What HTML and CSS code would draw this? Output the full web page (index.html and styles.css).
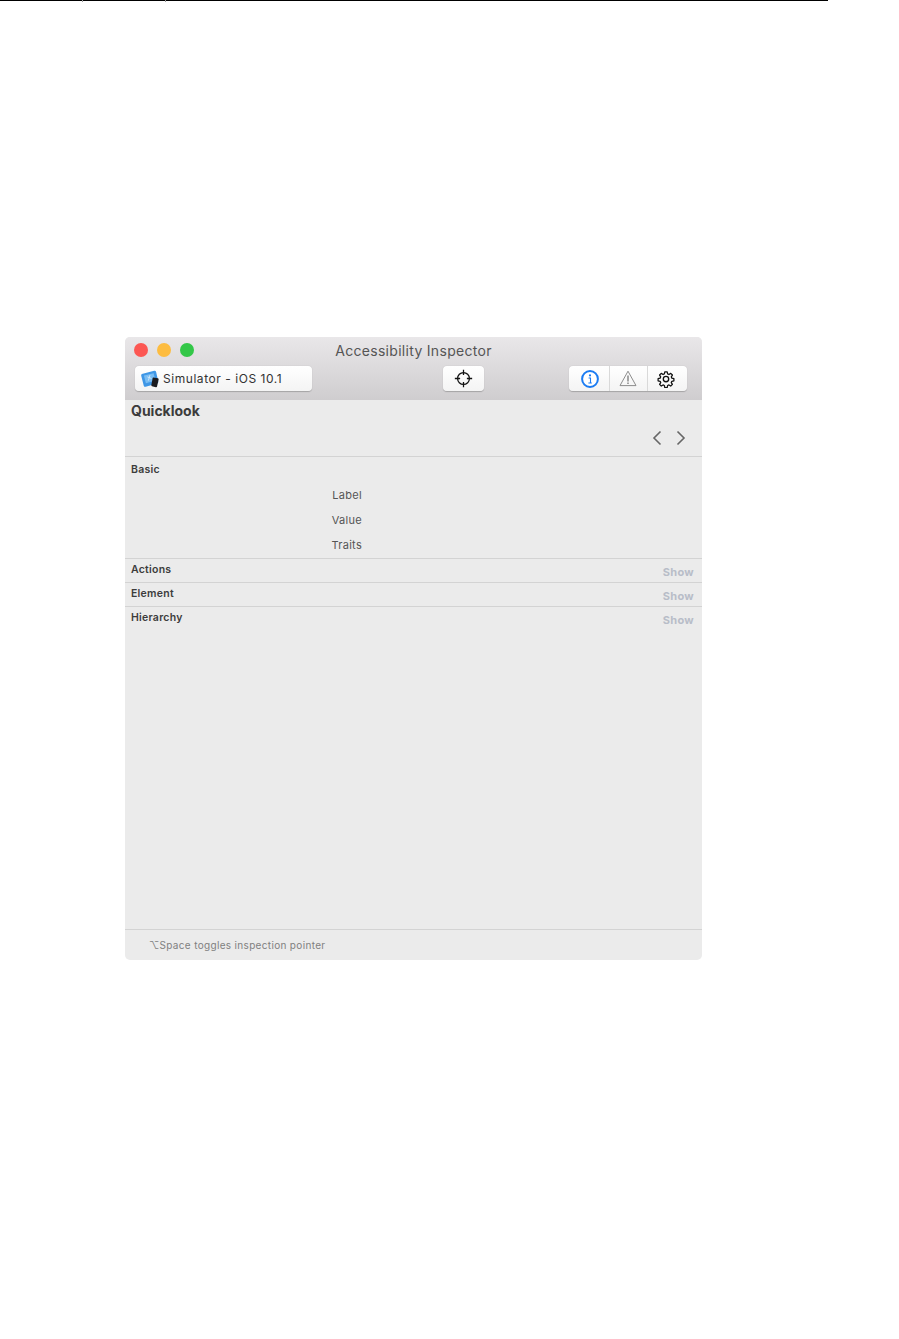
FILE: index.html
```html
<!DOCTYPE html>
<html lang="en">
<head>
    <meta charset="UTF-8">
    <title>Accessibility Inspector</title>
    <link rel="stylesheet" href="styles.css">
</head>
<body>
    <div class="top-rule">
        <span class="tick tick-one"></span>
        <span class="tick tick-two"></span>
    </div>
    <div class="window">
        <div class="titlebar">
            <div class="title-row">
                <div class="lights">
                    <span class="light red"></span>
                    <span class="light yellow"></span>
                    <span class="light green"></span>
                </div>
                <div class="title">Accessibility Inspector</div>
            </div>
            <div class="toolbar">
                <div class="btn target-picker">
                    <svg class="sim-icon" width="19" height="18" viewBox="0 0 18 17">
                        <path d="M0.8 3.8 L12.5 0.8 Q14 0.5 14.4 2 L16.4 11 Q16.6 12.4 15.2 12.8 L4.5 15.9 Q3 16.2 2.6 14.8 L0.2 5.4 Q0 4.2 0.8 3.8 Z" fill="#3f97e6"/>
                        <path d="M2.8 5.2 L12 3 L13.6 10 L4.6 12.6 Z" fill="#79bdf3"/>
                        <path d="M6 6.5 L10 8 M8.5 4.8 L7 10" stroke="#d8ecfb" stroke-width="0.8"/>
                        <path d="M11.8 7 L16 7.9 Q16.9 8.1 16.7 9 L15.2 15.6 Q15 16.5 14.1 16.3 L10.4 15.4 Q9.6 15.2 9.8 14.3 L11 7.7 Q11.1 6.9 11.8 7 Z" fill="#1b1b1f"/>
                    </svg>
                    <span>Simulator - iOS 10.1</span>
                </div>
                <div class="btn target-btn">
                    <svg width="19" height="19" viewBox="0 0 18 18" fill="none" stroke="#111" stroke-width="1.2">
                        <circle cx="9" cy="9" r="5.6"/>
                        <path d="M9 .8v5M9 12.2v5M.8 9h5M12.2 9h5"/>
                    </svg>
                </div>
                <div class="btn segments">
                    <div class="segment seg-info">
                        <svg width="18" height="18" viewBox="0 0 18 18">
                            <circle cx="9" cy="9" r="7.9" fill="#fff" stroke="#1c7cf2" stroke-width="2"/>
                            <circle cx="9" cy="5.4" r="1.1" fill="#1c7cf2"/>
                            <path d="M7.6 8h1.9v4.8M7.4 13h3.4" fill="none" stroke="#1c7cf2" stroke-width="1.1"/>
                        </svg>
                    </div>
                    <div class="segment seg-warn">
                        <svg width="18" height="17" viewBox="0 0 18 17" fill="none" stroke="#8c8c8c" stroke-width="1">
                            <path d="M9 1.2 L17 15.6 H1 Z" stroke-linejoin="round"/>
                            <path d="M9 5.6v5.8M9 12.4v1.6" stroke="#777" stroke-width="1.3"/>
                        </svg>
                    </div>
                    <div class="segment seg-gear">
                        <svg width="18" height="18" viewBox="0 0 24 24" fill="none" stroke="#111" stroke-width="1.8" stroke-linejoin="round">
                            <circle cx="12" cy="12" r="3.6"/>
                            <path d="M10.3 2.5h3.4l.6 2.9 1.9.8 2.5-1.6 2.4 2.4-1.6 2.5.8 1.9 2.9.6v3.2l-2.9.6-.8 1.9 1.6 2.5-2.4 2.4-2.5-1.6-1.9.8-.6 2.9h-3.4l-.6-2.9-1.9-.8-2.5 1.6-2.4-2.4 1.6-2.5-.8-1.9-2.9-.6v-3.2l2.9-.6.8-1.9-1.6-2.5 2.4-2.4 2.5 1.6 1.9-.8z" transform="translate(12 12) scale(.94) translate(-12 -12.6)"/>
                        </svg>
                    </div>
                </div>
            </div>
        </div>

        <div class="quicklook">
            <div class="quicklook-title">Quicklook</div>
            <div class="pager">
                <svg width="10" height="16" viewBox="0 0 10 16" fill="none" stroke="#666" stroke-width="1.6"><path d="M8.5 1.5 L2 8 L8.5 14.5"/></svg>
                <svg width="10" height="16" viewBox="0 0 10 16" fill="none" stroke="#666" stroke-width="1.6"><path d="M1.5 1.5 L8 8 L1.5 14.5"/></svg>
            </div>
        </div>

        <div class="section section-basic">
            <div class="section-head"><span class="section-name">Basic</span></div>
            <div class="field">Label</div>
            <div class="field">Value</div>
            <div class="field">Traits</div>
        </div>
        <div class="section">
            <div class="section-head"><span class="section-name">Actions</span><span class="show">Show</span></div>
        </div>
        <div class="section">
            <div class="section-head"><span class="section-name">Element</span><span class="show">Show</span></div>
        </div>
        <div class="section section-fill">
            <div class="section-head"><span class="section-name">Hierarchy</span><span class="show">Show</span></div>
        </div>

        <div class="footer">⌥Space toggles inspection pointer</div>
    </div>
</body>
</html>
```

FILE: styles.css
```css
html, body {
    margin: 0;
    height: 100%;
    background-color: #fff;
}
body {
    font-family: Inter, Roboto, "Liberation Sans", sans-serif;
    color: #333;
    overflow: hidden;
}
.top-rule {
    width: 828px;
    height: 1px;
    background-color: #000;
    display: flex;
    gap: 82px;
    padding-left: 82px;
    box-sizing: border-box;
}
.tick {
    width: 1px;
    height: 2px;
    background-color: #999;
}
.window {
    width: 577px;
    height: 623px;
    margin: 336px 0 0 125px;
    display: flex;
    flex-direction: column;
    background-color: #ebebeb;
    border-radius: 5px;
    overflow: hidden;
}
.titlebar {
    height: 63px;
    flex: none;
    background: linear-gradient(#e9e7e9, #cfcdcf);
}
.title-row {
    height: 29px;
    display: flex;
    align-items: center;
    position: relative;
}
.lights {
    display: flex;
    gap: 9px;
    padding-left: 9px;
    margin-top: -3px;
}
.light {
    width: 14px;
    height: 14px;
    border-radius: 50%;
}
.red { background-color: #fc5753; }
.yellow { background-color: #fdbc40; }
.green { background-color: #33c748; }
.title {
    position: absolute;
    left: 0;
    right: 0;
    top: 5px;
    text-align: center;
    font-size: 14px;
    line-height: 18px;
    letter-spacing: 0.3px;
    color: #555;
}
.toolbar {
    display: flex;
    align-items: center;
    padding: 0 15px 0 10px;
    height: 25px;
}
.btn {
    height: 25px;
    box-sizing: border-box;
    background: linear-gradient(#fff, #f4f4f4);
    border-radius: 4px;
    box-shadow: 0 0.5px 1px rgba(0, 0, 0, 0.22);
    display: flex;
    align-items: center;
}
.target-picker {
    width: 177px;
    padding-left: 6px;
    gap: 3px;
    font-size: 12px;
    letter-spacing: 0.55px;
    color: #333;
}
.target-btn {
    width: 41px;
    margin-left: 131px;
    justify-content: center;
    padding-right: 1px;
}
.segments {
    width: 118px;
    margin-left: auto;
}
.segment {
    height: 100%;
    display: flex;
    align-items: center;
    justify-content: center;
    box-sizing: border-box;
}
.seg-info { width: 41px; padding-left: 2px; border-right: 1px solid #d9d9d9; }
.seg-warn { width: 38px; padding-right: 2px; border-right: 1px solid #d9d9d9; }
.seg-gear { width: 39px; padding-right: 4px; }
.quicklook {
    height: 57px;
    flex: none;
    box-sizing: border-box;
    border-bottom: 1px solid #d3d3d3;
    padding: 2px 16px 0 6px;
}
.quicklook-title {
    font-size: 14px;
    line-height: 18px;
    font-weight: 700;
    color: #3c3c3c;
}
.pager {
    display: flex;
    justify-content: flex-end;
    gap: 14px;
    margin-top: 10px;
}
.section {
    flex: none;
    height: 24px;
    box-sizing: border-box;
    border-bottom: 1px solid #d3d3d3;
}
.section-basic {
    height: 102px;
}
.section-fill {
    flex: 1;
}
.section-head {
    display: flex;
    justify-content: space-between;
    padding: 3px 8px 0 6px;
    height: 16px;
}
.section-basic .section-head {
    padding-top: 5px;
    height: 26px;
    box-sizing: border-box;
}
.section-name {
    font-size: 10.5px;
    line-height: 16px;
    font-weight: 600;
    letter-spacing: 0.25px;
    color: #3c3c3c;
}
.show {
    font-size: 11px;
    line-height: 16px;
    font-weight: 700;
    letter-spacing: 0.3px;
    color: #b8bdc8;
    margin-top: 2px;
}
.field {
    width: 237px;
    height: 25.2px;
    line-height: 25px;
    text-align: right;
    font-size: 11px;
    letter-spacing: 0.3px;
    color: #555;
}
.footer {
    height: 30px;
    flex: none;
    box-sizing: border-box;
    padding: 8px 0 0 24px;
    font-size: 10px;
    line-height: 14px;
    letter-spacing: 0.33px;
    color: #808080;
}
```
